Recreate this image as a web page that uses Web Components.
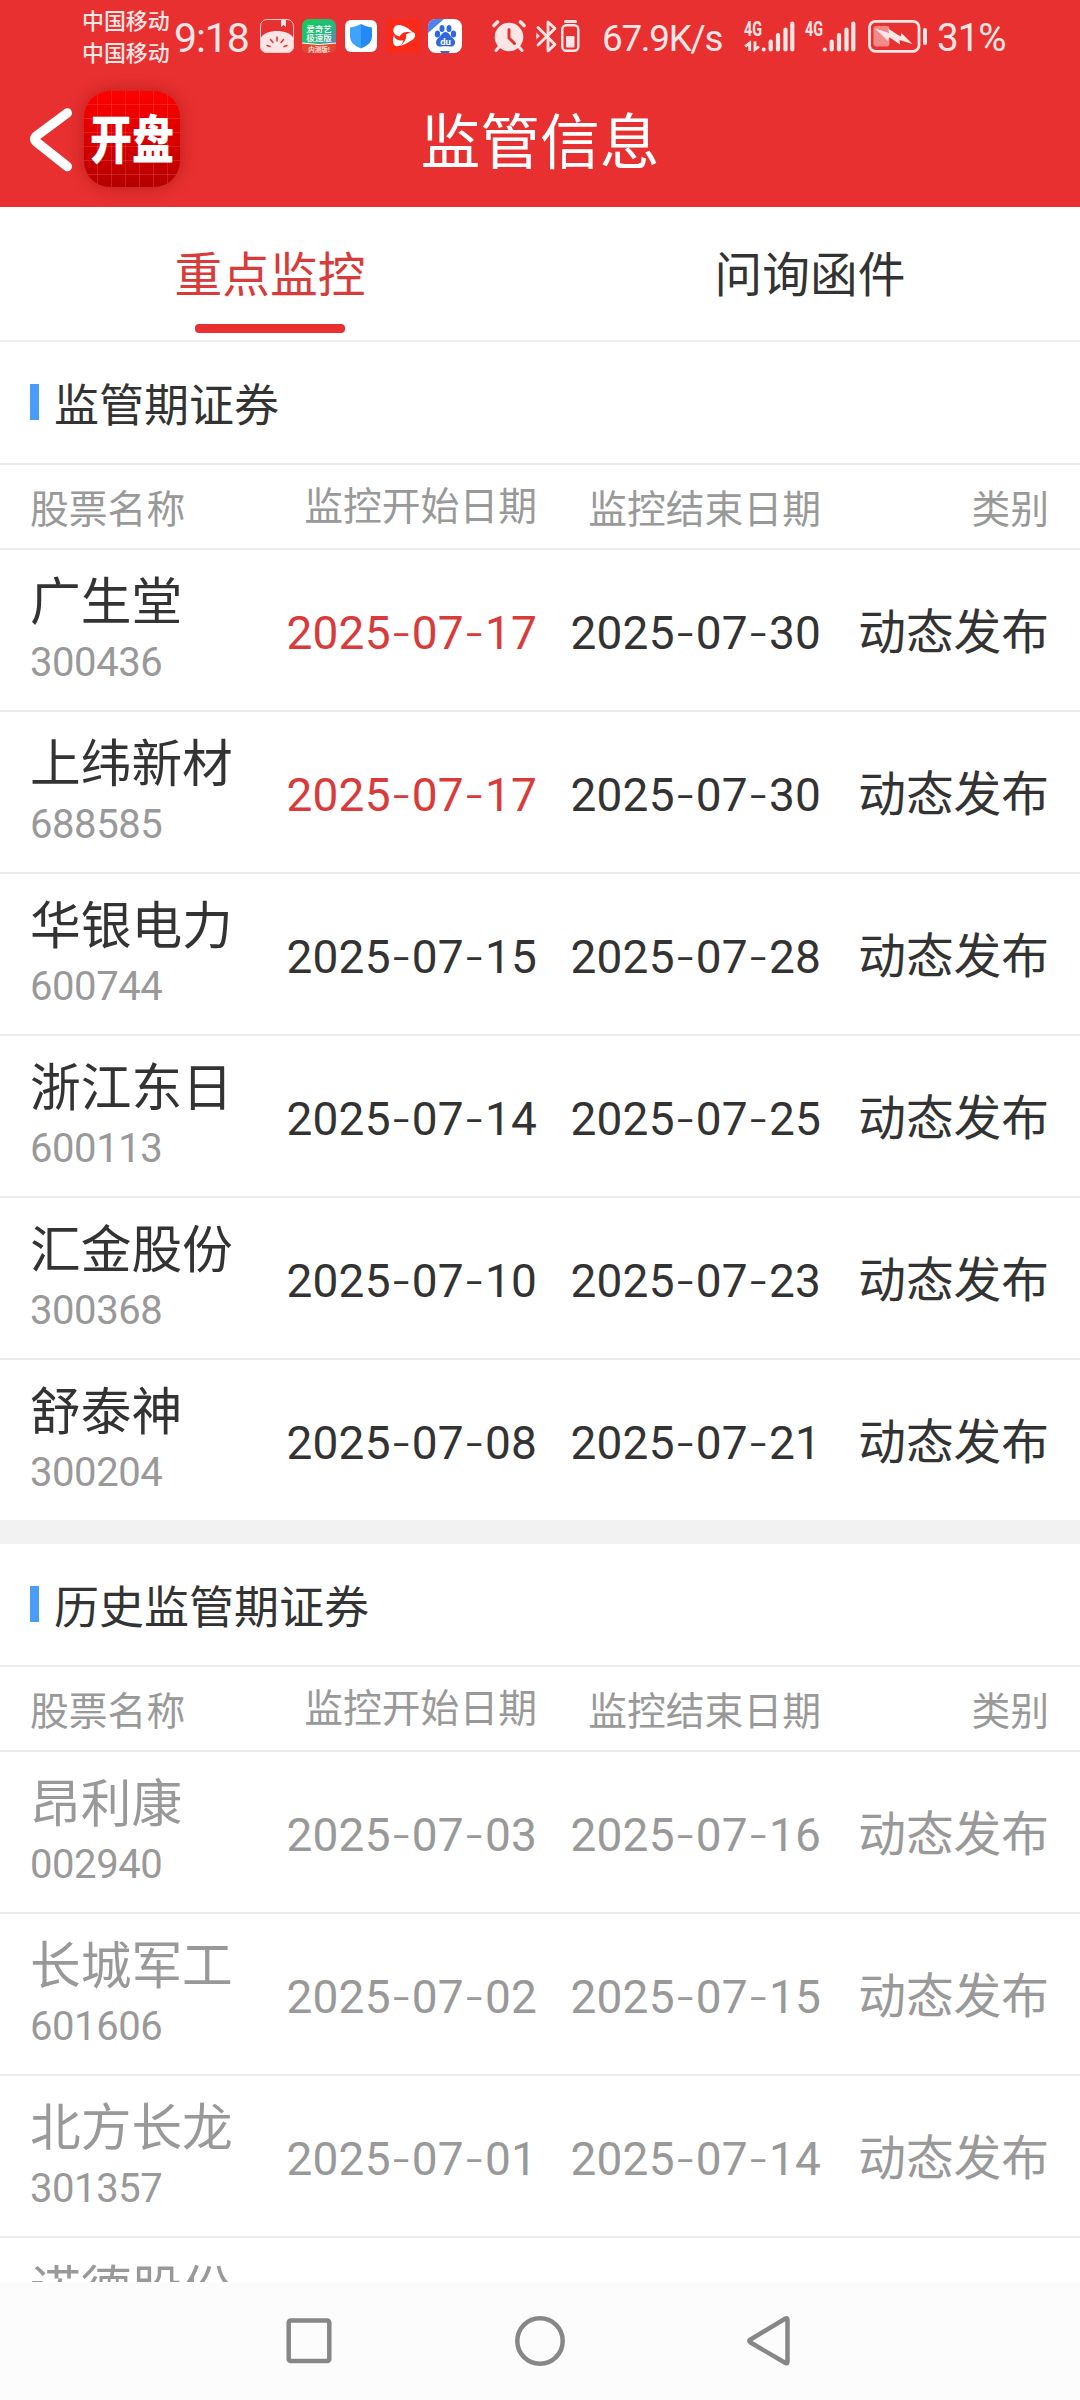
<!DOCTYPE html>
<html lang="zh-CN">
<head>
<meta charset="utf-8">
<title>监管信息</title>
<style>
html,body{margin:0;padding:0;width:1080px;height:2400px;overflow:hidden;background:#fff}
body{font-family:Roboto,"Noto Sans CJK SC",sans-serif;color:#333}
</style>
</head>
<body>
<app-screen></app-screen>
<script>
const define = (name, css, html) => customElements.define(name, class extends HTMLElement {
  connectedCallback() {
    if (this.shadowRoot) return;
    const body = typeof html === 'function' ? html(this) : html;
    this.attachShadow({mode: 'open'}).innerHTML = `<style>${css}</style>${body}`;
  }
});

define('status-bar', `
:host{display:flex;height:74px;color:#ffe6e6;box-sizing:border-box;padding-left:82px}
.carriers{display:flex;flex-direction:column;font-size:21.9px;line-height:32.4px;padding-top:6px;width:92px;white-space:nowrap;font-weight:500}
.t{line-height:74px;white-space:nowrap;padding-top:1px}
.clock{font-size:41px;width:85px;letter-spacing:-1.1px}
svg{display:block;flex:none}
.speed{font-size:36.8px;width:140px;padding-left:2px;letter-spacing:-1.25px;padding-top:2px}
.pct{font-size:38.5px;padding-left:7px;letter-spacing:-1px}
`, `
<div class="carriers"><span>中国移动</span><span>中国移动</span></div>
<div class="t clock">9:18</div>
<svg width="341" height="74" viewBox="259 0 341 74">
 <defs>
  <linearGradient id="gr" x1="0" y1="0" x2="1" y2="1"><stop offset="0" stop-color="#12ce5a"/><stop offset=".55" stop-color="#28b77e"/><stop offset="1" stop-color="#7b62d8"/></linearGradient>
  <linearGradient id="bl" x1="0" y1="0" x2="1" y2="0"><stop offset=".5" stop-color="#3fa2fb"/><stop offset=".5" stop-color="#258af5"/></linearGradient>
  <clipPath id="c1"><rect x="260" y="19" width="34" height="34" rx="7"/></clipPath>
  <clipPath id="c2"><rect x="302" y="19" width="34" height="34" rx="7"/></clipPath>
  <clipPath id="c3"><rect x="428" y="19" width="34" height="34" rx="8"/></clipPath>
 </defs>
 <g clip-path="url(#c1)"><path d="M260 39c3-6 10-8 17-8s14 2 17 8v15h-34z" fill="#ffe6e6"/><path d="M281 19v8l2.500-2 2.500 2v-8z" fill="#ffe6e6"/></g>
 <rect x="260.500" y="19.500" width="33" height="33" rx="6.500" fill="none" stroke="#ffc9c9"/>
 <path d="M277 37v4M270.500 39.500l2.500 3M283.500 39.500l-2.500 3M267 45.500l3 1M287 45.500l-3 1" stroke="#e83030" stroke-width="1.500" stroke-linecap="round"/>
 <g clip-path="url(#c2)"><rect x="302" y="19" width="34" height="34" fill="url(#gr)"/><path d="M302 43q17 3 34 0v10h-34z" fill="#e8452c"/><path d="M302 43q17 3 34 0" stroke="#fff" fill="none"/></g>
 <g fill="#fff" font-family="Noto Sans CJK SC" font-weight="500" font-size="8.500" text-anchor="middle"><text x="319" y="32">爱奇艺</text><text x="319" y="41">极速版</text><text x="319" y="51.500" font-size="6.500">内测版!</text></g>
 <rect x="345" y="20" width="32" height="32" rx="6" fill="#fff"/>
 <path d="M361 24c4 2 7 3 11 3.500V36c0 6-4 9.500-11 12.500-7-3-11-6.500-11-12.500v-8.500c4-.500 7-1.500 11-3.500z" fill="url(#bl)"/>
 <rect x="387" y="19" width="33" height="34" fill="#fa2a1a"/>
 <g fill="#fff"><path d="M393.500 32c-1-5 3-8 8-6.500 5 1.500 9 4 12 8-6-2.500-11-2-14 3-3-1-5.500-2-6-4.500z"/><path d="M414.500 33c2 4-1 6.500-5 8.500-3 2-6.500 4-9.500 4.500 4-3 7-7 6-11.500 3-1.500 6-2.500 8.500-1.500z"/><path d="M394 35c.500 4 4 6 9.500 5.500-1 3-2.500 4.500-5 5.500-4 1-5.500-2-5.500-5.500 0-2 .300-4 1-5.500z"/></g>
 <rect x="428" y="19" width="34" height="34" rx="8" fill="#fff"/>
 <g clip-path="url(#c3)"><path d="M428 19h16l-16 14z" fill="#4c83ee"/><path d="M440 51h10l-2 3h-6z" fill="#2f67de"/></g>
 <g fill="#2f67de"><ellipse cx="437.500" cy="34" rx="2.700" ry="3.600"/><ellipse cx="442" cy="28.500" rx="2.500" ry="3.600"/><ellipse cx="449" cy="28.500" rx="2.500" ry="3.600"/><ellipse cx="453.500" cy="34" rx="2.700" ry="3.600"/><path d="M445.500 32c3 0 4 3 6 5s4 3 3.500 6-3 4-5 3.500-6-.5-9 0-5-1-5-4 2-4 3.500-5.500 3-5 6-5z"/></g>
 <text x="445.500" y="45" fill="#fff" font-family="Roboto" font-weight="700" font-size="9.500" text-anchor="middle">du</text>
 <circle cx="509" cy="37" r="14.300" fill="#ffe6e6"/>
 <path d="M494 25.500l3.500-3.500M524 25.500l-3.500-3.500" stroke="#ffe6e6" stroke-width="3.600" stroke-linecap="round"/><path d="M499 47l-3 3.500M519 47l3 3.500" stroke="#ffe6e6" stroke-width="3" stroke-linecap="round"/>
 <path d="M509 29.500V38l5.500 5.500" fill="none" stroke="#e83030" stroke-width="3" stroke-linecap="round"/>
 <path d="M538 45l17-16.500-7-6.500v29l7-6.500-17-17" fill="none" stroke="#ffe6e6" stroke-width="2.800" stroke-linejoin="round" stroke-linecap="round"/><path d="M536.300 32.500l3.500 3.500-3.500 3.500z" fill="#ffe6e6"/>
 <rect x="562.300" y="25.300" width="16" height="25.400" rx="4" fill="none" stroke="#ffe6e6" stroke-width="2.400"/><path d="M565.500 21.500h10" stroke="#ffe6e6" stroke-width="3" stroke-linecap="round"/><rect x="566" y="36" width="8.500" height="11.500" rx="1" fill="#ffe6e6"/>
</svg>
<div class="t speed">67.9K/s</div>
<svg width="188" height="74" viewBox="741 0 188 74">
 <g fill="#ffe6e6" font-family="Roboto" font-weight="700" font-size="20"><text x="743" y="35.500" textLength="18" lengthAdjust="spacingAndGlyphs">4G</text><text x="804" y="35.500" textLength="18" lengthAdjust="spacingAndGlyphs">4G</text></g>
 <path d="M748.700 51V43l-4.500 3.500M754 41.500v8l4-3" fill="none" stroke="#ffe6e6" stroke-width="2.800"/>
 <g stroke="#ffe6e6" stroke-width="4.200" stroke-linecap="round"><path d="M762.700 49.500h.01M769.700 49.500v-8M777 49.500v-14.500M784.500 49.500v-20M791.300 49.500v-26"/><path d="M823.700 49.500h.01M830.700 49.500v-8M838 49.500v-14.500M845.500 49.500v-20M852.300 49.500v-26"/></g>
 <rect x="868.500" y="21.300" width="49.500" height="30" rx="6" fill="none" stroke="#ffe6e6" stroke-width="2.800"/>
 <rect x="872.500" y="26" width="16" height="20.500" rx="3" fill="#f28a8a"/>
 <path d="M874 28.500l14 4.500-1-4.500 12.500 8 1-3.500 11 11-13-4 .500 4.500-11-7.500-1 4z" fill="#ffe6e6"/>
 <path d="M924 30v13" stroke="#ffe6e6" stroke-width="4" stroke-linecap="round"/>
</svg>
<div class="t pct">31%</div>
`);

define('app-logo', `
:host{display:flex;align-items:center;justify-content:center;width:96px;height:96px;border-radius:26px;box-sizing:border-box;
background:repeating-linear-gradient(90deg,transparent 0 13px,rgba(255,120,110,.25) 13px 14px),repeating-linear-gradient(180deg,transparent 0 13px,rgba(255,120,110,.25) 13px 14px),linear-gradient(#ff0000,#b40000);box-shadow:0 0 16px rgba(120,0,0,.4)}
span{font:900 42px/60px "Noto Sans CJK SC",sans-serif;color:#fff;display:block;transform:scaleY(1.25);white-space:nowrap;padding-bottom:5px}
`, `<span><slot></slot></span>`);

define('title-bar', `
:host{display:grid;grid-template-columns:1fr auto 1fr;height:133px;color:#fff;align-items:start}
.left{display:flex;padding:17px 0 0 29px}
svg{display:block;width:55px;height:96px}
h1{margin:0;font-size:59.8px;line-height:133px;padding-top:4px;height:129px;font-weight:400}
`, `<div class="left"><svg viewBox="0 0 55 96"><path d="M38.300 22L8 44.500Q3.500 48 8 51.500L38.300 75.500" fill="none" stroke="#fff" stroke-width="9.500" stroke-linecap="round" stroke-linejoin="round"/></svg><app-logo>开盘</app-logo></div><h1><slot></slot></h1><span></span>`);

define('nav-tab', `
:host{flex:1;display:flex;flex-direction:column;align-items:center;height:133px;font-size:47.7px;color:#333}
:host([active]){color:#d93a3a}
span{line-height:133px;height:114px;padding-top:3px}
i{display:block;width:150px;height:9px;border-radius:4px}
:host([active]) i{background:#e83030}
`, `<span><slot></slot></span><i></i>`);

define('tab-bar', `:host{display:flex;height:133px;border-bottom:2px solid #efefef}`, `<slot></slot>`);

define('section-title', `
:host{display:flex;align-items:center;height:121px;border-bottom:2px solid #ebebeb;padding-left:30px;font-size:45px;color:#333}
i{width:9px;height:36px;background:#4a9cf8;margin-right:15px;margin-top:-1px}
span{padding-bottom:1px}
`, `<i></i><span><slot></slot></span>`);

const GRID = `grid-template-columns:256px 251px 284px 1fr;padding:0 31px 0 30px;box-sizing:border-box;width:1080px;`;

define('table-head', `
:host{display:grid;${GRID}height:85px;border-bottom:2px solid #ebebeb;color:#999;font-size:38.8px;line-height:89px;white-space:nowrap}
span{text-align:right}
span:first-of-type{text-align:left}
.up{line-height:84px}
`, `<span>股票名称</span><span class="up">监控开始日期</span><span>监控结束日期</span><span>类别</span>`);

const day = s => s.split('-').join('<b>-</b>');
define('stock-row', `
:host{display:grid;${GRID}height:162px;border-bottom:2px solid #ebebeb;color:#333;align-items:center;white-space:nowrap}
:host([last]){height:160px;border-bottom:0}
:host([past]){color:#999}
.name{font-size:50.7px;line-height:60px}
.code{font-size:40px;line-height:48px;letter-spacing:-.42px;color:#999;padding-top:6px}
.id{align-self:start;padding-top:23px}
.d{font-size:46px;letter-spacing:.2px;text-align:right;padding-top:5px}
.d b{font:300 46px Inter,sans-serif;line-height:1}
.hot{color:#d93a3a}
.type{font-size:47.7px;text-align:right;padding-bottom:3px}
`, el => {
  const a = n => el.getAttribute(n) || '';
  const id = `<div class="id"><div class="name">${a('name')}</div>${a('code') && `<div class="code">${a('code')}</div>`}</div>`;
  if (!a('start')) return id;
  return `${id}<div class="d ${el.hasAttribute('hot') ? 'hot' : ''}">${day(a('start'))}</div><div class="d">${day(a('end'))}</div><div class="type">动态发布</div>`;
});

define('stock-section', `:host{display:block}`, `<section-title><slot name="title"></slot></section-title><table-head></table-head><slot></slot>`);

define('system-nav', `
:host{display:flex;height:118px;background:#fcfcfc;flex:none;justify-content:center}
svg{display:block}
`, `<svg width="1080" height="118" viewBox="0 2282 1080 118" fill="none" stroke="#878787" stroke-width="4.500" stroke-linejoin="round"><rect x="288.700" y="2320.500" width="40.600" height="40.600" rx="2"/><circle cx="540" cy="2341" r="22.700"/><path d="M785.500 2318.500q2-1 2 1.500v41.500q0 2.500-2 1.500L750.500 2342.500q-2.500-1.500 0-3z"/></svg>`);

define('app-screen', `
:host{display:flex;flex-direction:column;width:1080px;height:2400px;overflow:hidden}
header{background:#e83030;height:207px;flex:none}
main{flex:1;min-height:0;overflow:hidden}
.gap{height:24px;background:#f2f2f2}
`, `
<header><status-bar></status-bar><title-bar>监管信息</title-bar></header>
<main>
<tab-bar><nav-tab active>重点监控</nav-tab><nav-tab>问询函件</nav-tab></tab-bar>
<stock-section><span slot="title">监管期证券</span>
<stock-row name="广生堂" code="300436" start="2025-07-17" end="2025-07-30" hot></stock-row>
<stock-row name="上纬新材" code="688585" start="2025-07-17" end="2025-07-30" hot></stock-row>
<stock-row name="华银电力" code="600744" start="2025-07-15" end="2025-07-28"></stock-row>
<stock-row name="浙江东日" code="600113" start="2025-07-14" end="2025-07-25"></stock-row>
<stock-row name="汇金股份" code="300368" start="2025-07-10" end="2025-07-23"></stock-row>
<stock-row name="舒泰神" code="300204" start="2025-07-08" end="2025-07-21" last></stock-row>
</stock-section>
<div class="gap"></div>
<stock-section><span slot="title">历史监管期证券</span>
<stock-row past name="昂利康" code="002940" start="2025-07-03" end="2025-07-16"></stock-row>
<stock-row past name="长城军工" code="601606" start="2025-07-02" end="2025-07-15"></stock-row>
<stock-row past name="北方长龙" code="301357" start="2025-07-01" end="2025-07-14"></stock-row>
<stock-row past name="诺德股份"></stock-row>
</stock-section>
</main>
<system-nav></system-nav>
`);
</script>
</body>
</html>
